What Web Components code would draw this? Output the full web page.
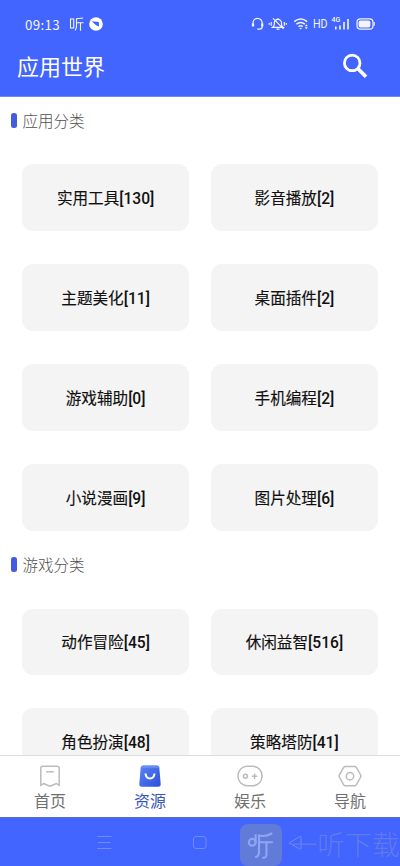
<!DOCTYPE html>
<html lang="zh-CN">
<head>
<meta charset="utf-8">
<title>应用世界</title>
<style>
html,body{margin:0;height:100%;overflow:hidden;background:#fff}
body{font-family:Roboto,"Noto Sans CJK SC",sans-serif}
</style>
</head>
<body>
<app-screen></app-screen>
<script>
class Base extends HTMLElement{
  connectedCallback(){
    if(this.shadowRoot)return;
    this.attachShadow({mode:'open'}).innerHTML=this.render();
  }
}
customElements.define('status-bar',class extends Base{
  render(){return `<style>
  :host{display:flex;height:48px;box-sizing:border-box;padding:14px 24px 14px 25px;align-items:center;color:#f2f5ff;font:14px/20px "Noto Sans","Noto Sans CJK SC",sans-serif}
  .time{width:43.5px;font:13.4px/20px "Noto Sans CJK SC",sans-serif;letter-spacing:.3px}
  .ting{width:20px;height:20px;display:block}
  svg{display:block;flex:none;fill:none;stroke:currentColor}
  .grow{flex:1}
  .hd{font:400 13px/20px Roboto,sans-serif;width:19px;transform:scaleX(.82);transform-origin:0 50%}
  .net{display:grid;width:18px;height:14px}
  .net>*{grid-area:1/1}
  .net span{font:500 7px/7px Roboto,sans-serif}
  </style>
  <span class="time">09:13</span>
  <svg class="ting" viewBox="0 0 20 20" stroke-width="1.1"><path d="M1.5 5h3.2v9H1.5zM14.2 4 7.5 4.7v6.8q0 3-1.3 5M7.5 8.7h7M11.5 8.7v8"/></svg>
  <svg width="14" height="14" viewBox="0 0 14 14"><circle cx="7" cy="7" r="6.8" fill="#fff" stroke="none"/><path d="M2.8 4.2 9.8 5 10 9.6 7.6 8.6 5.4 6.8z" fill="#4263ff" stroke="none"/></svg>
  <span class="grow"></span>
  <svg style="margin-right:3.5px" width="14" height="14" viewBox="1 0 14 14" stroke-width="1.2"><path d="M3 8V6a4.6 4.6 0 0 1 9.2 0v4q0 2-2.7 2.2H7.2"/><path d="M3 6.5v3M12.2 6.5v3" stroke-width="2.3"/></svg>
  <svg style="margin-right:4.5px" width="20" height="14" viewBox="0 0 20 14" stroke-width="1.2"><path d="M4.7 10.3q1.6-1 1.6-3.2V6a3.6 3.6 0 0 1 7.2 0v1.2q0 2 1.6 3.1zM8.5 12.2h3M9.9 1v1.4M5 1.3l10.5 10.5M3.2 5v3.8M1.2 6v1.8M16.3 5v3.8M18.2 6v1.8"/></svg>
  <svg width="20" height="14" viewBox="0 0 20 14" stroke-width="1.5"><path d="M1.2 4.7q6.5-5.3 13 0M3.4 7.2q4.3-3.5 8.5 0M5.5 9.6q2.2-1.7 4.2 0"/><path d="M6.2 11h2.8L7.6 12.5z" fill="currentColor" stroke="none"/><path d="m11.8 9.2 1.5-2 1.5 2zM11.8 10.3l1.5 2 1.5-2z" fill="currentColor" stroke="none"/></svg>
  <span class="hd">HD</span>
  <span class="net"><span>4G</span><svg width="18" height="14" viewBox="0 0 18 14" stroke-width="1.6"><path d="M3.8 9.5v3M8 8.5v4M12 5v7.5M16 2v10.5"/></svg></span>
  <svg style="margin-left:6.5px" width="20" height="14" viewBox="0 0 20 14"><rect x="1" y="1.8" width="16" height="10.4" rx="3.5" stroke-width="1.2"/><rect x="2.6" y="3.5" width="11.8" height="7" rx="1.7" fill="currentColor" stroke="none"/><path d="M18.2 5v3.8" stroke-width="1.1"/></svg>`}
});
customElements.define('title-bar',class extends Base{
  render(){return `<style>
  :host{display:flex;height:49px;box-sizing:border-box;padding:0 28px 0 17px;justify-content:space-between;color:#fff;border-bottom:1px solid #708aef}
  span{font:400 22px/35px "Noto Sans CJK SC",sans-serif}
  svg{margin-top:1px}
  </style><span><slot></slot></span>
  <svg width="34" height="34" viewBox="0 0 34 34" fill="none" stroke="#fff" stroke-width="2.8"><circle cx="14.2" cy="13.9" r="7.8"/><path d="m20 19.8 8 8" stroke-width="3.7"/></svg>`}
});
customElements.define('category-card',class extends Base{
  render(){return `<style>
  :host{display:flex;align-items:center;justify-content:center;height:66.6px;padding-top:1px;box-sizing:border-box;border-radius:11px;background:#f4f4f4;color:#101010;font:400 15.6px/24px "Noto Sans CJK SC",sans-serif}
  span{font-family:Roboto,sans-serif;font-weight:500}
  div{-webkit-text-stroke:.15px currentColor}
  span{-webkit-text-stroke:0}
  </style><div><slot></slot><span>[${this.getAttribute('count')}]</span></div>`}
});
customElements.define('category-section',class extends Base{
  render(){return `<style>
  :host{display:block;height:444.3px}
  h2{display:flex;align-items:center;gap:6px;height:24px;margin:0;padding:11px 0 0 11px;font:300 15.5px/22px "Noto Sans CJK SC",sans-serif;color:#505050}
  h2::before{content:"";width:5.5px;height:15px;border-radius:2.5px;background:#435ce0}
  h2 span{margin-top:-1px}
  .grid{display:grid;grid-template-columns:1fr 1fr;gap:33.3px 22.2px;padding:32.3px 22.3px 0}
  </style><h2><span>${this.getAttribute('label')}</span></h2><div class="grid"><slot></slot></div>`}
});
const icons={
home:`<path d="M4.8 4.2q0-2 2-2h14.4q2 0 2 2v17.3L20.5 19.5 14 22.2 7.5 19.5 4.8 21.5zM10.2 7.7h7.6"/>`,
bag:`<defs><linearGradient id="g" x1="0" y1="0" x2="1" y2="1"><stop stop-color="#5b85f3"/><stop offset="1" stop-color="#2b50db"/></linearGradient></defs><path d="M7 1.5h14q2 0 2.3 2L24.7 20q.1 2.8-2.5 2.8H5.8q-2.6 0-2.5-2.8L4.7 3.5q.3-2 2.3-2z" fill="url(#g)" stroke="none"/><path d="M7 1.5h14q1.8 0 2.3 2.5H4.7Q5.2 1.5 7 1.5z" fill="#7197f6" stroke="none" opacity=".6"/><path d="M9.5 9.5q.5 5 4.5 5t4.5-5" stroke="#fff" stroke-width="2.1"/>`,
game:`<rect x="2" y="2.3" width="24" height="19.4" rx="9.2"/><circle cx="9.4" cy="12.2" r="2"/><path d="M15.8 12.2h5.6M18.6 9.4V15"/>`,
nav:`<path d="M9.2 2.4h9.6q1 0 1.5.9l4.4 7.7q.6 1 0 2l-4.4 7.8q-.5.9-1.5.9H9.2q-1 0-1.5-.9L3.3 13q-.6-1 0-2l4.4-7.7q.5-.9 1.5-.9z"/><circle cx="14" cy="12.2" r="3.7"/>`};
customElements.define('tab-item',class extends Base{
  render(){return `<style>
  :host{flex:1;display:flex;flex-direction:column;align-items:center;padding-top:7.5px;color:#707070;font:400 16px/24px "Noto Sans CJK SC",sans-serif}
  :host([active]){color:#3856bd}
  svg{display:block;fill:none;stroke:#bcbcbc;stroke-width:1.5;stroke-linejoin:round}
  </style><svg width="28" height="24" viewBox="0 0 28 24">${icons[this.getAttribute('icon')]}</svg><span><slot></slot></span>`}
});
customElements.define('tab-bar',class extends Base{
  render(){return `<style>:host{display:flex;height:62px;box-sizing:border-box;border-top:1px solid #dedede;background:#fff}</style><slot></slot>`}
});
customElements.define('system-nav',class extends Base{
  render(){return `<style>
  :host{display:block;position:relative;height:49px;box-sizing:border-box;background:#4264ff;border-top:1px solid #5c70c0;overflow:hidden}
  .keys{display:flex;padding:15px 95px 0 94px;justify-content:space-between}
  svg{display:block;flex:none;fill:none;stroke:#718bf5;stroke-width:1}
  .mark{position:absolute;left:240px;top:6px;display:flex;color:#607be9;font:300 27.3px/38px "Noto Sans CJK SC",sans-serif;white-space:nowrap}
  .mark svg{stroke:#8fa5f4;stroke-width:2.1;margin-right:8px}
  .keys svg:nth-child(2){margin-left:1px}
  </style>
  <div class="keys">
  <svg width="20" height="20"><path d="M3 3.5h14.5M4 9.5h12.5M3 15.5h14.5"/></svg>
  <svg width="20" height="20"><rect x="3.5" y="3.5" width="12.5" height="12" rx="2.5"/></svg>
  <svg width="20" height="20" stroke-width="1.3"><path d="M4 10 15 3.5q1-.2 1 .8v11q0 1-1 .8z"/></svg>
  </div>
  <div class="mark"><svg width="42" height="42" viewBox="0 0 42 42"><rect width="42" height="42" rx="8" fill="#617bd9" stroke="none"/><circle cx="12.2" cy="18.3" r="3.4"/><path d="M15.6 18V11M31.5 9.5Q26 13 19 11.5V28q0 4-3 5M19 18.2h13M26.5 18v12q0 4.2-3.5 3.7" stroke-linecap="round"/></svg><span>一听下载</span></div>`}
});
const apps=[['实用工具',130],['影音播放',2],['主题美化',11],['桌面插件',2],['游戏辅助',0],['手机编程',2],['小说漫画',9],['图片处理',6]];
const games=[['动作冒险',45],['休闲益智',516],['角色扮演',48],['策略塔防',41]];
const cards=a=>a.map(([t,n])=>`<category-card count="${n}">${t}</category-card>`).join('');
customElements.define('app-screen',class extends Base{
  render(){return `<style>
  :host{display:flex;flex-direction:column;height:866px;overflow:hidden}
  header{background:#4264ff;flex:none}
  main{flex:1;min-height:0;overflow:hidden;background:#fff}
  </style>
  <header><status-bar></status-bar><title-bar>应用世界</title-bar></header>
  <main><category-section label="应用分类">${cards(apps)}</category-section><category-section label="游戏分类">${cards(games)}</category-section></main>
  <tab-bar><tab-item icon="home">首页</tab-item><tab-item icon="bag" active>资源</tab-item><tab-item icon="game">娱乐</tab-item><tab-item icon="nav">导航</tab-item></tab-bar>
  <system-nav></system-nav>`}
});
</script>
</body>
</html>
